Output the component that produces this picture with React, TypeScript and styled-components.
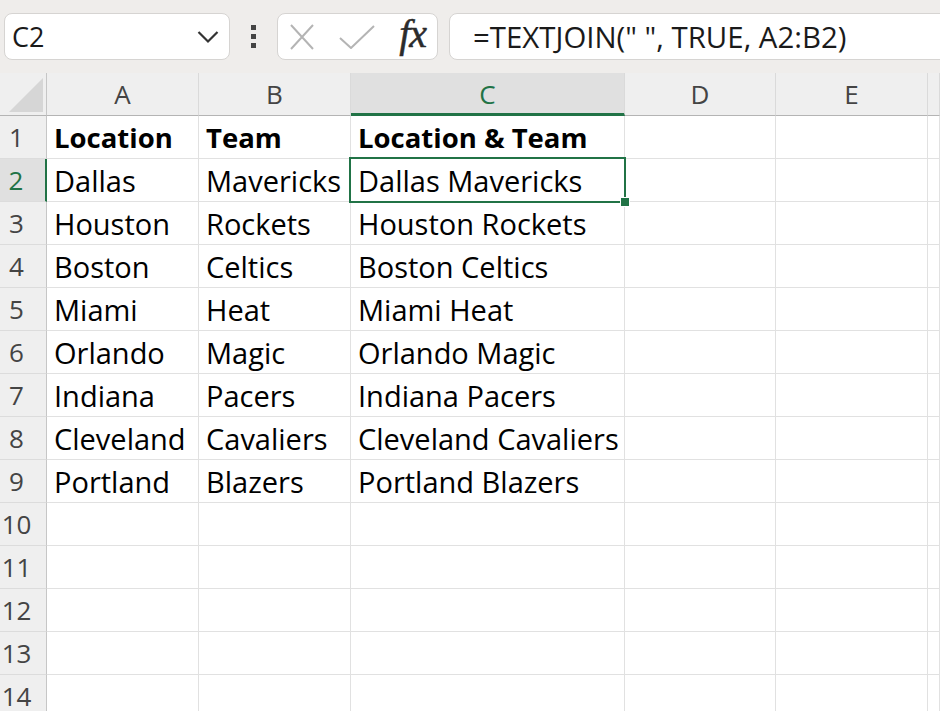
import React from 'react';
import styled, { createGlobalStyle, css } from 'styled-components';

const GlobalStyle = createGlobalStyle`
  html, body {
    margin: 0;
    padding: 0;
    background: #ffffff;
    overflow: hidden;
  }
  body {
    font-family: "Open Sans", "Noto Sans", sans-serif;
  }
`;

const GREEN = '#217346';

const Window = styled.div`
  width: 940px;
  height: 711px;
  display: flex;
  flex-direction: column;
  overflow: hidden;
`;

const Toolbar = styled.div`
  height: 73px;
  flex: none;
  background: #efedeb;
  display: flex;
  align-items: center;
  padding: 0 0 0 4px;
  box-sizing: border-box;
`;

const Box = styled.div`
  height: 47px;
  background: #ffffff;
  border: 1px solid #d6d4d2;
  border-radius: 8px;
  box-sizing: border-box;
  display: flex;
  align-items: center;
`;

const NameBox = styled(Box)`
  width: 226px;
  padding: 0 10px 0 7px;
  justify-content: space-between;
  font-size: 27px;
  color: #1a1a1a;
`;

const Dots = styled.div`
  width: 47px;
  display: flex;
  flex-direction: column;
  align-items: center;
  gap: 4px;
  & > span {
    width: 5px;
    height: 5px;
    background: #444;
  }
`;

const FxBox = styled(Box)`
  width: 161px;
  padding: 0 11px 0 12px;
  justify-content: space-between;
`;

const Fx = styled.span`
  font-family: "Liberation Serif", "DejaVu Serif", serif;
  font-style: italic;
  font-size: 40px;
  color: #2b2b2b;
  line-height: 1;
  margin-top: -6px;
  letter-spacing: -1px;
  -webkit-text-stroke: 0.5px #2b2b2b;
`;

const FormulaBox = styled(Box)`
  flex: 1;
  margin-left: 11px;
  margin-right: -20px;
  padding-left: 23px;
  font-size: 29.4px;
  color: #1a1a1a;
`;

const Grid = styled.div`
  display: grid;
  grid-template-columns: 47px 152px 152px 274px 151px 152px 1fr;
  grid-template-rows: 43px;
  grid-auto-rows: 43px;
  flex: 1;
  align-content: start;
`;

const Corner = styled.div`
  background: #efefef;
  border-right: 1px solid #c6c6c6;
  border-bottom: 1px solid #b4b4b4;
  box-sizing: border-box;
  display: flex;
  align-items: flex-end;
  justify-content: flex-end;
  padding: 0 3px 3px 0;
`;

const ColHead = styled.div<{ $active?: boolean }>`
  background: #efefef;
  border-right: 1px solid #dadada;
  border-bottom: 1px solid #b4b4b4;
  box-sizing: border-box;
  display: flex;
  align-items: center;
  justify-content: center;
  font-size: 26px;
  color: #444;
  ${(p) =>
    p.$active &&
    css`
      background: #e0e0e0;
      color: ${GREEN};
      border-bottom: 3px solid ${GREEN};
      padding-top: 2px;
    `}
`;

const RowHead = styled.div<{ $active?: boolean }>`
  background: #efefef;
  border-right: 1px solid #c6c6c6;
  border-bottom: 1px solid #dcdcdc;
  box-sizing: border-box;
  display: flex;
  align-items: center;
  justify-content: center;
  padding-right: 13px;
  font-size: 26px;
  color: #444;
  ${(p) =>
    p.$active &&
    css`
      background: #e0e0e0;
      color: ${GREEN};
      border-right: 2px solid ${GREEN};
    `}
`;

const Cell = styled.div<{ $bold?: boolean }>`
  position: relative;
  border-right: 1px solid #e1e1e1;
  border-bottom: 1px solid #e1e1e1;
  box-sizing: border-box;
  display: flex;
  align-items: center;
  padding: 0 0 0 7px;
  font-size: ${(p) => (p.$bold ? '27.5px' : '29px')};
  color: #000;
  white-space: nowrap;
  font-weight: ${(p) => (p.$bold ? 700 : 400)};
`;

const Selection = styled.div`
  position: absolute;
  left: -2px;
  top: -2px;
  right: -2px;
  bottom: -2px;
  border: 2px solid ${GREEN};
  pointer-events: none;
  z-index: 2;
  &::after {
    content: '';
    position: absolute;
    right: -6px;
    bottom: -6px;
    width: 8px;
    height: 8px;
    background: ${GREEN};
    border: 1px solid #fff;
  }
`;

const cols = ['A', 'B', 'C', 'D', 'E', ''];

const data: [string, string][] = [
  ['Dallas', 'Mavericks'],
  ['Houston', 'Rockets'],
  ['Boston', 'Celtics'],
  ['Miami', 'Heat'],
  ['Orlando', 'Magic'],
  ['Indiana', 'Pacers'],
  ['Cleveland', 'Cavaliers'],
  ['Portland', 'Blazers'],
];

function App() {
  const rows: string[][] = [['Location', 'Team', 'Location & Team']];
  data.forEach(([a, b]) => rows.push([a, b, `${a} ${b}`]));
  while (rows.length < 14) rows.push(['', '', '']);

  return (
    <Window>
      <GlobalStyle />
      <Toolbar>
        <NameBox>
          <span>C2</span>
          <svg width="22" height="14" viewBox="0 0 22 14">
            <path d="M1.5 2 L11 11.5 L20.5 2" fill="none" stroke="#333" strokeWidth="2.2" />
          </svg>
        </NameBox>
        <Dots>
          <span />
          <span />
          <span />
        </Dots>
        <FxBox>
          <svg width="24" height="26" viewBox="0 0 24 26">
            <path d="M1 1 L23 25 M23 1 L1 25" stroke="#b4b4b4" strokeWidth="2" fill="none" />
          </svg>
          <svg width="36" height="24" viewBox="0 0 36 24">
            <path d="M1 13 L12 23 L35 1" stroke="#b4b4b4" strokeWidth="2" fill="none" />
          </svg>
          <Fx>fx</Fx>
        </FxBox>
        <FormulaBox>=TEXTJOIN(" ", TRUE, A2:B2)</FormulaBox>
      </Toolbar>
      <Grid>
        <Corner>
          <svg width="34" height="34" viewBox="0 0 34 34">
            <path d="M34 0 L34 34 L0 34 Z" fill="#d6d6d6" />
          </svg>
        </Corner>
        {cols.map((c) => (
          <ColHead key={c || 'F'} $active={c === 'C'}>
            {c}
          </ColHead>
        ))}
        {rows.map((r, i) => (
          <React.Fragment key={i}>
            <RowHead $active={i === 1}>{i + 1}</RowHead>
            {r.map((v, j) => (
              <Cell key={j} $bold={i === 0}>
                {v}
                {i === 1 && j === 2 && <Selection />}
              </Cell>
            ))}
            <Cell />
            <Cell />
            <Cell />
          </React.Fragment>
        ))}
      </Grid>
    </Window>
  );
}

export default App;
